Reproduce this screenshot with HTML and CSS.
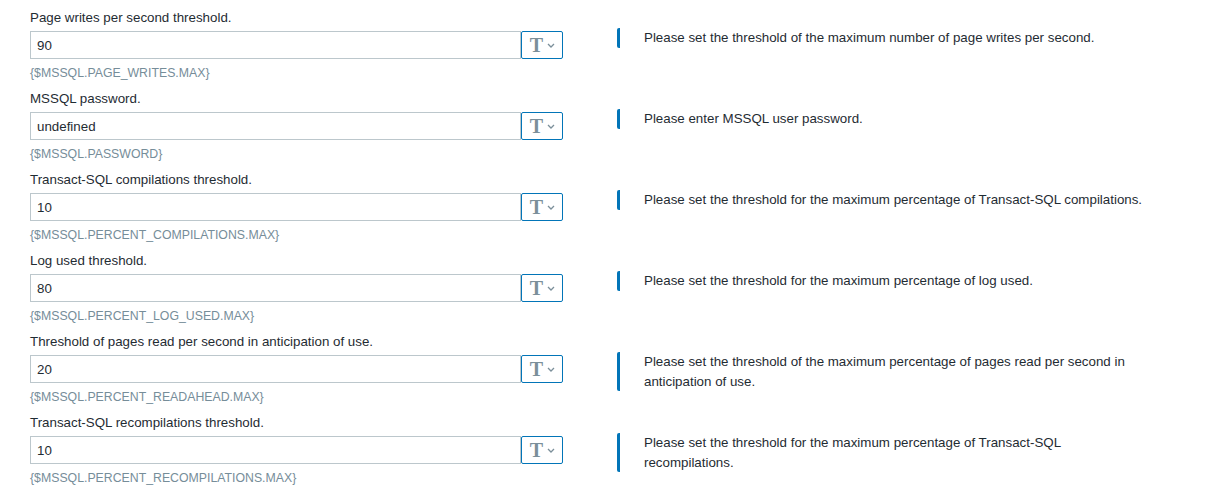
FILE: index.html
```html
<!DOCTYPE html>
<html lang="en">
<head>
  <meta charset="UTF-8" />
  <title>Template macros</title>
  <link rel="stylesheet" href="styles.css">
</head>
<body>

  <div class="macros">

    <div class="macro-row">
      <div class="macro-field">
        <label>Page writes per second threshold.</label>
        <div class="macro-input">
          <input type="text" value="90" />
          <button class="type-btn"><span class="type-t">T</span><svg width="8" height="5" viewBox="0 0 8 5"><path d="M1 1l3 3 3-3" /></svg></button>
        </div>
        <div class="macro-name">{$MSSQL.PAGE_WRITES.MAX}</div>
      </div>
      <div class="macro-desc">Please set the threshold of the maximum number of page writes per second.</div>
    </div>

    <div class="macro-row">
      <div class="macro-field">
        <label>MSSQL password.</label>
        <div class="macro-input">
          <input type="text" value="undefined" />
          <button class="type-btn"><span class="type-t">T</span><svg width="8" height="5" viewBox="0 0 8 5"><path d="M1 1l3 3 3-3" /></svg></button>
        </div>
        <div class="macro-name">{$MSSQL.PASSWORD}</div>
      </div>
      <div class="macro-desc">Please enter MSSQL user password.</div>
    </div>

    <div class="macro-row">
      <div class="macro-field">
        <label>Transact-SQL compilations threshold.</label>
        <div class="macro-input">
          <input type="text" value="10" />
          <button class="type-btn"><span class="type-t">T</span><svg width="8" height="5" viewBox="0 0 8 5"><path d="M1 1l3 3 3-3" /></svg></button>
        </div>
        <div class="macro-name">{$MSSQL.PERCENT_COMPILATIONS.MAX}</div>
      </div>
      <div class="macro-desc">Please set the threshold for the maximum percentage of Transact-SQL compilations.</div>
    </div>

    <div class="macro-row">
      <div class="macro-field">
        <label>Log used threshold.</label>
        <div class="macro-input">
          <input type="text" value="80" />
          <button class="type-btn"><span class="type-t">T</span><svg width="8" height="5" viewBox="0 0 8 5"><path d="M1 1l3 3 3-3" /></svg></button>
        </div>
        <div class="macro-name">{$MSSQL.PERCENT_LOG_USED.MAX}</div>
      </div>
      <div class="macro-desc">Please set the threshold for the maximum percentage of log used.</div>
    </div>

    <div class="macro-row">
      <div class="macro-field">
        <label>Threshold of pages read per second in anticipation of use.</label>
        <div class="macro-input">
          <input type="text" value="20" />
          <button class="type-btn"><span class="type-t">T</span><svg width="8" height="5" viewBox="0 0 8 5"><path d="M1 1l3 3 3-3" /></svg></button>
        </div>
        <div class="macro-name">{$MSSQL.PERCENT_READAHEAD.MAX}</div>
      </div>
      <div class="macro-desc">Please set the threshold of the maximum percentage of pages read per second in anticipation of use.</div>
    </div>

    <div class="macro-row">
      <div class="macro-field">
        <label>Transact-SQL recompilations threshold.</label>
        <div class="macro-input">
          <input type="text" value="10" />
          <button class="type-btn"><span class="type-t">T</span><svg width="8" height="5" viewBox="0 0 8 5"><path d="M1 1l3 3 3-3" /></svg></button>
        </div>
        <div class="macro-name">{$MSSQL.PERCENT_RECOMPILATIONS.MAX}</div>
      </div>
      <div class="macro-desc">Please set the threshold for the maximum percentage of Transact-SQL recompilations.</div>
    </div>

  </div>

</body>
</html>
```

FILE: styles.css
```css
body {
  margin: 0;
  background: #fff;
  font-family: "Liberation Sans", Arial, sans-serif;
  font-size: 13.33px;
  color: #1f2c33;
}
.macros {
  padding: 11px 30px 0;
}
.macro-row {
  display: flex;
  align-items: flex-start;
  gap: 54px;
  height: 81px;
}
.macro-field {
  width: 533px;
  flex-shrink: 0;
}
label {
  display: block;
  line-height: 14px;
  margin-bottom: 6px;
}
.macro-input {
  display: flex;
  height: 28px;
}
.macro-input input {
  flex: 1;
  min-width: 0;
  height: 28px;
  box-sizing: border-box;
  border: 1px solid #bcc7cc;
  border-radius: 0;
  padding: 0 6px;
  font-family: inherit;
  font-size: 13.33px;
  color: #1f2c33;
  outline: none;
}
.type-btn {
  width: 42px;
  height: 28px;
  box-sizing: border-box;
  border: 1px solid #0275b8;
  border-radius: 2px;
  background: #fff;
  display: flex;
  align-items: center;
  justify-content: center;
  gap: 4px;
  padding: 0 0 0 1px;
  cursor: pointer;
}
.type-t {
  font-family: "Liberation Serif", "Times New Roman", serif;
  font-weight: bold;
  font-size: 20px;
  line-height: 1;
  color: #7b8f9a;
}
.type-btn svg path {
  fill: none;
  stroke: #7b8f9a;
  stroke-width: 1.3;
}
.macro-name {
  margin-top: 7px;
  line-height: 14px;
  font-size: 12.3px;
  color: #768d99;
}
.macro-desc {
  margin-top: 17px;
  width: 508px;
  border-left: 3px solid #0275b8;
  border-radius: 2px;
  padding-left: 24px;
  line-height: 19.5px;
}
```
